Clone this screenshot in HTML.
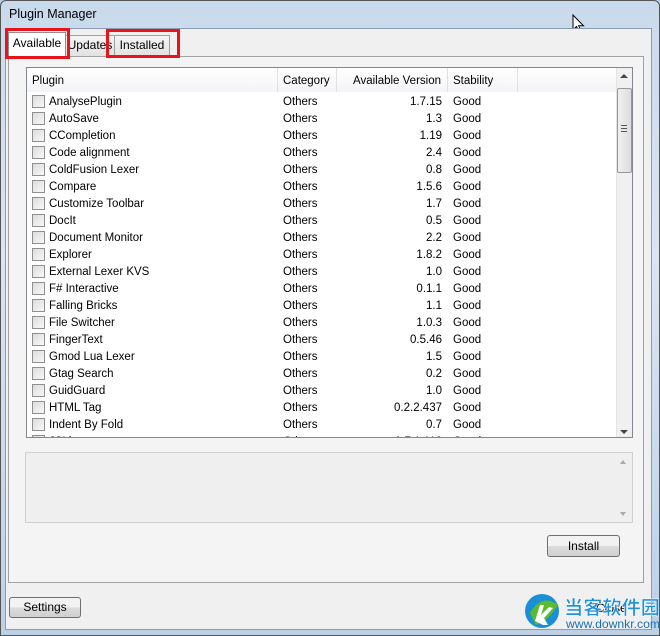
<!DOCTYPE html>
<html><head><style>
*{margin:0;padding:0;box-sizing:border-box}
body{width:660px;height:636px;overflow:hidden;background:#b9d1ea;font-family:"Liberation Sans",sans-serif;font-size:11.5px;color:#000;position:relative}
.abs{position:absolute}
#frame{left:0;top:0;width:660px;height:636px;background:linear-gradient(#c9daec,#d9e6f3 40%,#bcd0e6);border-radius:6px 6px 0 0;border:1px solid #555}
#content{left:5px;top:28px;width:647px;height:602px;background:#f0f0f0;border:1px solid #8c9bb0}
#panel{left:8px;top:56px;width:636px;height:527px;background:#f4f4f4;border:1px solid #a0a0a0}
.tab{position:absolute;border:1px solid #a0a0a0;border-bottom:none;background:linear-gradient(#f4f4f4,#e2e2e2);font-size:12px;text-align:center}
.red{position:absolute;border:3px solid #e8141c}
#list{left:26px;top:67px;width:607px;height:371px;background:#fff;border:1px solid #828790;overflow:hidden}
.hdr{position:absolute;top:0;height:24px;border-right:1px solid #e0e0e0;line-height:26px;padding-left:5px;background:linear-gradient(#fff,#f3f4f6)}
.row{position:absolute;left:0;height:17px;line-height:17px;width:590px}
.cb{position:absolute;left:5px;top:2px;width:13px;height:13px;border:1px solid #8f8f8f;background:linear-gradient(135deg,#dcdcdc,#f8f8f8)}
.btn{position:absolute;border:1px solid #707070;border-radius:3px;background:linear-gradient(#f2f2f2 50%,#dddddd 50%,#cfcfcf);text-align:center;font-size:12px}
</style></head><body>
<div id="frame" class="abs"></div>
<div class="abs" style="left:9px;top:7px;font-size:12.5px">Plugin Manager</div>
<svg class="abs" style="left:572px;top:14px" width="14" height="20"><path d="M1 1 L1 16 L4.5 12.5 L7 18 L9 17 L6.7 11.8 L11.5 11.8 Z" fill="#fff" stroke="#000" stroke-width="1"/></svg>
<div id="content" class="abs"></div>
<div id="panel" class="abs"></div>
<div class="tab" style="left:65px;top:35px;width:50px;height:21px;line-height:19px">Updates</div>
<div class="tab" style="left:114px;top:35px;width:56px;height:21px;line-height:19px">Installed</div>
<div class="tab" style="left:8px;top:32px;width:58px;height:25px;line-height:21px;background:#fff;border-color:#8f8f8f">Available</div>
<div class="red" style="left:5px;top:28px;width:65px;height:31px"></div>
<div class="red" style="left:106px;top:29px;width:74px;height:29px"></div>
<div id="list" class="abs">
<div class="hdr" style="left:0;width:251px">Plugin</div>
<div class="hdr" style="left:251px;width:59px">Category</div>
<div class="hdr" style="left:310px;width:111px;text-align:right;padding-right:6px">Available Version</div>
<div class="hdr" style="left:421px;width:70px">Stability</div>
<div class="hdr" style="left:491px;width:98px;border:none"></div>
<div class="abs" style="left:589px;top:0;width:17px;height:370px;background:#f0f0f0;border-left:1px solid #e4e4e4"></div>
<div class="abs" style="left:593px;top:6px;width:0;height:0;border:4px solid transparent;border-bottom:4px solid #444;border-top:none"></div>
<div class="abs" style="left:593px;top:362px;width:0;height:0;border:4px solid transparent;border-top:4px solid #444;border-bottom:none"></div>
<div class="abs" style="left:590px;top:20px;width:15px;height:85px;border:1px solid #979797;border-radius:2px;background:linear-gradient(90deg,#f0f0f0,#dcdcdc)"></div>
<div class="abs" style="left:594px;top:57px;width:6px;height:7px;border-top:1px solid #555;border-bottom:1px solid #555"><div style="margin-top:2px;border-top:1px solid #555"></div></div>
<div id="rows"></div>
</div>
<div class="abs" style="left:25px;top:452px;width:608px;height:71px;border:1px solid #d0d0d0;background:#efefef"></div>
<div class="abs" style="left:620px;top:460px;border:3px solid transparent;border-bottom:4px solid #aaa;border-top:none"></div>
<div class="abs" style="left:620px;top:512px;border:3px solid transparent;border-top:4px solid #aaa;border-bottom:none"></div>
<div class="btn" style="left:547px;top:535px;width:73px;height:22px;line-height:20px">Install</div>
<div class="btn" style="left:9px;top:597px;width:72px;height:21px;line-height:19px">Settings</div>
<div class="abs" style="left:596px;top:601px;font-size:12px">Close</div>
<svg class="abs" style="left:522px;top:590px" width="138" height="42">
<circle cx="20" cy="21" r="17" fill="#1b8fd6"/><path d="M8 23 Q20 3 36 15 Q26 31 14 35Z" fill="#5bbb2f"/><path d="M13 31 L18 15 L22 15 L19 25 L27 17 L31 18 L22 28 L26 35 L21 35 Z" fill="#fff"/>
<text x="42" y="24" font-family="'Noto Sans CJK SC',sans-serif" font-weight="bold" font-size="19" fill="#1e8fd8" stroke="#fff" stroke-width="0.5" textLength="96" lengthAdjust="spacingAndGlyphs">当客软件园</text>
<text x="44" y="38" font-family="'Liberation Sans',sans-serif" font-size="12" fill="#1a6fb0" textLength="94" lengthAdjust="spacingAndGlyphs">www.downkr.com</text>
</svg>
<script>
var d=[["AnalysePlugin","1.7.15"],["AutoSave","1.3"],["CCompletion","1.19"],["Code alignment","2.4"],["ColdFusion Lexer","0.8"],["Compare","1.5.6"],["Customize Toolbar","1.7"],["DocIt","0.5"],["Document Monitor","2.2"],["Explorer","1.8.2"],["External Lexer KVS","1.0"],["F# Interactive","0.1.1"],["Falling Bricks","1.1"],["File Switcher","1.0.3"],["FingerText","0.5.46"],["Gmod Lua Lexer","1.5"],["Gtag Search","0.2"],["GuidGuard","1.0"],["HTML Tag","0.2.2.437"],["Indent By Fold","0.7"],["JSLint","0.7.1.112"]];
var h="";d.forEach(function(r,i){h+='<div class="row" style="top:'+(26+i*17)+'px"><div class="cb" style="top:1px"></div><span class="abs" style="left:22px">'+r[0]+'</span><span class="abs" style="left:256px">Others</span><span class="abs" style="left:310px;width:105px;text-align:right">'+r[1]+'</span><span class="abs" style="left:426px">Good</span></div>'});
document.getElementById("rows").innerHTML=h;
</script>
</body></html>
